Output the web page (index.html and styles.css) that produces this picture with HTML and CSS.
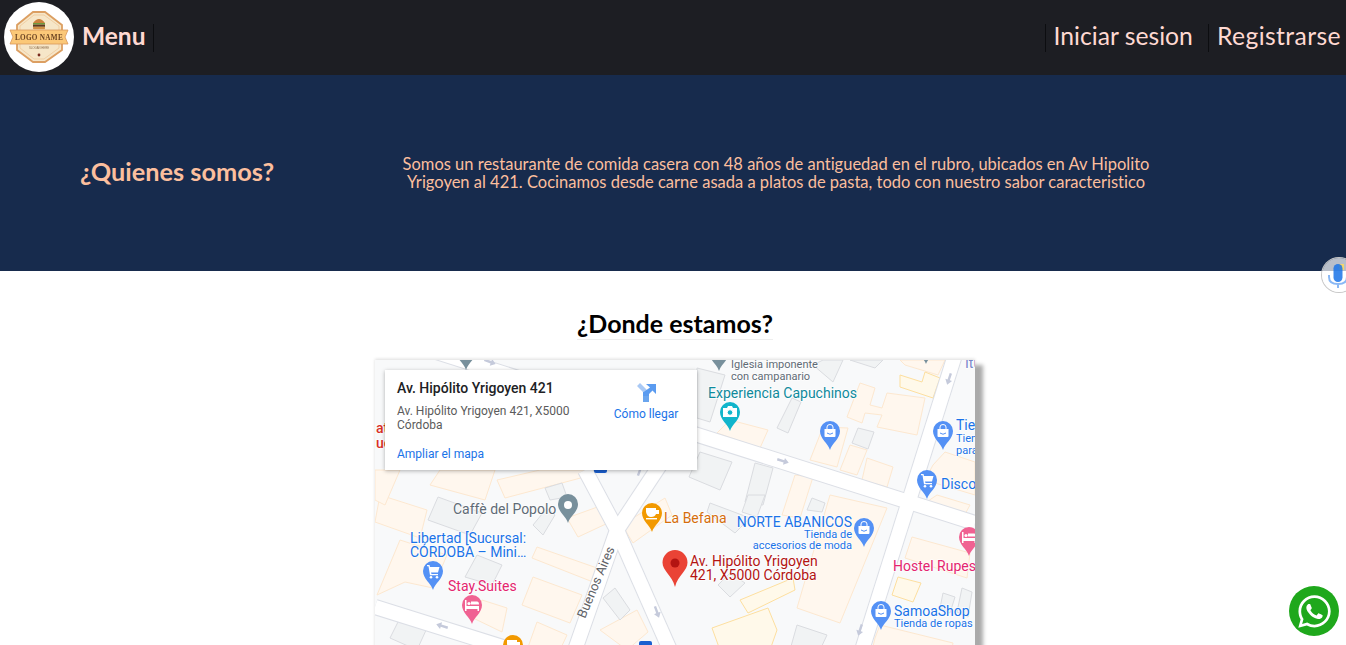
FILE: index.html
```html
<!DOCTYPE html>
<html lang="es">
<head>
<meta charset="utf-8">
<title>Restaurante</title>
<link rel="stylesheet" href="styles.css">
</head>
<body>
<header class="topbar">
  <nav class="nav-left">
    <svg class="logo" viewBox="0 0 70 70" aria-label="Logo">
      <circle cx="35" cy="35" r="35" fill="#fff"/>
      <path d="M29 10H41L58 23V48L41 60H29L13 48V23Z" fill="#f6e6c8" stroke="#dc9f62" stroke-width="1.800"/>
      <path d="M30 13H40L55 24V46L40 57H30L16 46V24Z" fill="none" stroke="#ecc08c" stroke-width=".6"/>
      <path d="M29 21Q35 13 41 21Z" fill="#c9803c"/>
      <rect x="29" y="21" width="12" height="1.600" fill="#6f9a3d"/>
      <rect x="29" y="22.600" width="12" height="2.200" fill="#5b3a22"/>
      <rect x="29" y="24.800" width="12" height="2.400" rx="1" fill="#d08f45"/>
      <path d="M6 28H64L61 35L64 42H6L9 35Z" fill="#fbc878" stroke="#d9975a" stroke-width=".8"/>
      <text class="logo-name" x="35" y="38">LOGO NAME</text>
      <text class="logo-slogan" x="35" y="47">SLOGAN HERE</text>
      <circle cx="35" cy="53" r="1.400" fill="#7a2c20"/>
    </svg>
    <a class="nav-link nav-menu">Menu</a>
  </nav>
  <nav class="nav-right">
    <a class="nav-link nav-auth">Iniciar sesion</a>
    <a class="nav-link nav-auth">Registrarse</a>
  </nav>
</header>

<section class="about">
  <h2 class="about-title">¿Quienes somos?</h2>
  <p class="about-text">Somos un restaurante de comida casera con 48 años de antiguedad en el rubro, ubicados en Av Hipolito Yrigoyen al 421. Cocinamos desde carne asada a platos de pasta, todo con nuestro sabor caracteristico</p>
</section>

<section class="where">
  <h2 class="where-title">¿Donde estamos?</h2>
  <div class="map">
    <svg class="map-canvas" viewBox="375 360 600 450" width="600" height="450">
      <defs>
        <path id="pin" d="M0 0C-2-7-10-11-10-19A10 10 0 1 1 10-19C10-11 2-7 0 0Z"/>
        <g id="i-bag" class="glyph"><path d="M-5.500-21H5.500V-14Q5.500-13 4.500-13H-4.500Q-5.500-13-5.500-14Z"/><path class="glyph-line" d="M-3-21V-23Q-3-25.500 0-25.500T3-23V-21"/><path class="glyph-cut" d="M-3-17Q0-14.500 3-17"/></g>
        <g id="i-cart" class="glyph"><path d="M-6-25H-3.500L-3-23H6.500L5-17.500H-2L-1.500-16H5V-14.800H-3L-4.500-23.800H-6Z"/><circle cx="-2" cy="-12.800" r="1.300"/><circle cx="4" cy="-12.800" r="1.300"/></g>
        <g id="i-cam" class="glyph"><path d="M-7-23H-3L-2-25H2L3-23H7V-14H-7Z"/><circle class="glyph-hole" cx="0" cy="-18.500" r="2.800"/></g>
        <g id="i-cup" class="glyph"><path d="M-6-24H4V-22H7V-18H4Q3-15-1-15T-6-20Z"/><rect x="-6" y="-14" width="11" height="1.400"/></g>
        <g id="i-bed" class="glyph"><path d="M-7-24H-5.500V-18H7V-13H5.500V-15H-5.500V-13H-7Z"/><circle cx="-3" cy="-20.500" r="1.600"/><path d="M-1-22.500H5Q7-22.500 7-19.500H-1Z"/></g>
        <g id="i-arrow"><path class="arrow" d="M-6-1.200H1V-3.500L6 0L1 3.500V1.200H-6Z"/></g>
      </defs>

      <rect class="ground" x="375" y="360" width="600" height="450"/>

      <g class="b-beige">
        <path d="M847 417L860 383L875 388L870 405L882 408L887 393L925 398L917 435L877 427L882 415L865 413L862 423Z"/>
        <path d="M717 433L730 420L768 430L760 448Z"/>
        <path d="M810 460L823 427L848 428L837 467Z"/>
        <path d="M840 470L850 445L867 450L857 475Z"/>
        <path d="M862 480L867 458L893 467L887 487Z"/>
        <path d="M933 465L945 452L975 462V495L925 480Z"/>
        <path d="M782 515L795 475L813 477L800 518Z"/>
        <path d="M830 495L887 508L840 623L797 608Z"/>
        <path d="M905 558L912 537L970 553L967 578Z"/>
        <path d="M875 638L880 625L953 643L950 660H870Z"/>
        <path d="M922 505L937 495L970 505L963 518Z"/>
        <path d="M375 522L380 495L427 510L420 538Z"/>
        <path d="M377 595L400 540L447 555L433 588L405 582Z"/>
        <path d="M532 558L537 547L597 568L593 582Z"/>
        <path d="M522 605L533 577L582 595L570 623Z"/>
        <path d="M473 618L482 600L507 608L502 632Z"/>
        <path d="M527 650L537 622L567 635L560 650Z"/>
        <path d="M600 630L637 610L648 632L627 650Z"/>
        <path d="M567 518L603 505L608 523L578 537Z"/>
        <path d="M622 525L665 498L672 515L633 543Z"/>
        <path d="M430 485L440 470L495 470L485 500Z"/>
        <path d="M497 480L540 470L585 470L592 475L505 498Z"/>
        <path d="M375 470H400L385 505L375 500Z"/>
        <path d="M900 360H945L938 375L905 365Z"/>
      </g>
      <g class="b-yellow">
        <path d="M900 375L922 382L925 372L940 378L933 398L900 387Z"/>
        <path d="M740 600L793 578L795 590L748 613Z"/>
        <path d="M712 628L768 608L777 630L770 650H720Z"/>
        <path d="M892 595L898 577L921 583L913 602Z"/>
      </g>
      <g class="b-gray">
        <path d="M852 443L858 428L874 432L868 449Z"/>
        <path d="M777 428L792 398L801 402L788 433Z"/>
        <path d="M697 368L725 375L710 422L697 418Z"/>
        <path d="M689 477L700 452L732 462L720 490Z"/>
        <path d="M745 502L755 463L773 468L763 505Z"/>
        <path d="M813 365L823 360H843L833 382Z"/>
        <path d="M850 360L875 368L883 360Z"/>
        <path d="M718 585L730 573L745 583L730 597Z"/>
        <path d="M790 650L797 625L827 635L820 650Z"/>
        <path d="M940 608L943 593L955 597L950 613Z"/>
        <path d="M957 612L962 588L972 592L968 617Z"/>
        <path d="M742 512L748 495L765 495L757 517Z"/>
        <path d="M707 512L710 503L750 518L735 533Z"/>
        <path d="M807 510L812 498L825 503L822 512Z"/>
        <path d="M428 520L438 497L482 513L470 535Z"/>
        <path d="M465 577L477 555L502 565L492 585Z"/>
        <path d="M390 638L400 618L427 628L417 650Z"/>
        <path d="M603 598L615 588L630 610L620 620Z"/>
        <path d="M533 525L547 508L555 515L543 535Z"/>
        <path d="M545 488L562 483L567 497L550 500Z"/>
      </g>

      <g class="road-edge">
        <path d="M430 350L975 523"/>
        <path d="M955 355L862 650"/>
        <path d="M375 607L570 668"/>
        <path d="M575 650L617 530L585 470"/>
        <path d="M617 530L670 650"/>
        <path d="M617 530L660 465"/>
      </g>
      <g class="road">
        <path d="M430 350L975 523"/>
        <path d="M955 355L862 650"/>
        <path d="M375 607L570 668"/>
        <path d="M575 650L617 530L585 470"/>
        <path d="M617 530L670 650"/>
        <path d="M617 530L660 465"/>
      </g>

      <use href="#i-arrow" transform="translate(783 461) rotate(17)"/>
      <use href="#i-arrow" transform="translate(949 379) rotate(108)"/>
      <use href="#i-arrow" transform="translate(442 626) rotate(197)"/>
      <use href="#i-arrow" transform="translate(657 612) rotate(70)"/>
      <use href="#i-arrow" transform="translate(860 630) rotate(108)"/>
      <use href="#i-arrow" transform="translate(640 470) rotate(-70)"/>
      <use href="#i-arrow" transform="translate(490 362) rotate(20)"/>

      <text class="t t-red t-b" x="376" y="433">at</text>
      <text class="t t-red t-b" x="376" y="448">ue</text>

      <use class="pin-gray" href="#pin" transform="translate(466 370)"/>
      <use class="pin-gray" href="#pin" transform="translate(719 371)"/>
      <use class="pin-gray" href="#pin" transform="translate(926 364) scale(.7)"/>
      <text class="t t-small t-gray" x="731" y="368">Iglesia imponente</text>
      <text class="t t-small t-gray" x="731" y="380">con campanario</text>
      <text class="t t-indigo" x="965" y="368">Itu</text>

      <text class="t t-teal" x="708" y="398">Experiencia Capuchinos</text>
      <use class="pin-teal" href="#pin" transform="translate(730 431)"/>
      <use href="#i-cam" transform="translate(730 431)"/>

      <use class="pin-blue" href="#pin" transform="translate(830 450)"/>
      <use href="#i-bag" transform="translate(830 450)"/>

      <use class="pin-blue" href="#pin" transform="translate(943 450)"/>
      <use href="#i-bag" transform="translate(943 450)"/>
      <text class="t t-blue" x="956" y="430">Tie</text>
      <text class="t t-small t-blue" x="956" y="442">Tien</text>
      <text class="t t-small t-blue" x="956" y="454">para</text>

      <use class="pin-blue" href="#pin" transform="translate(927 499)"/>
      <use href="#i-cart" transform="translate(927 499)"/>
      <text class="t t-blue" x="941" y="489">Disco</text>

      <rect class="transit" x="594" y="462" width="13" height="11" rx="2"/>
      <rect class="transit" x="639" y="641" width="13" height="12" rx="2"/>

      <text class="t t-gray" x="453" y="514">Caffè del Popolo</text>
      <use class="pin-gray" href="#pin" transform="translate(568 523)"/>
      <circle class="pin-dot" cx="568" cy="505" r="4"/>

      <use class="pin-orange" href="#pin" transform="translate(652 532)"/>
      <use href="#i-cup" transform="translate(652 532)"/>
      <text class="t t-orange" x="664" y="523">La Befana</text>

      <text class="t t-road" transform="translate(585 619) rotate(-67)">Buenos Aires</text>

      <text class="t t-blue t-end" x="852" y="527">NORTE ABANICOS</text>
      <text class="t t-small t-blue t-end" x="852" y="538">Tienda de</text>
      <text class="t t-small t-blue t-end" x="852" y="549">accesorios de moda</text>
      <use class="pin-blue" href="#pin" transform="translate(864 547)"/>
      <use href="#i-bag" transform="translate(864 547)"/>

      <use class="pin-pink" href="#pin" transform="translate(969 556)"/>
      <use href="#i-bed" transform="translate(969 556)"/>
      <text class="t t-pink" x="893" y="571">Hostel Rupes</text>

      <use class="pin-blue" href="#pin" transform="translate(881 630)"/>
      <use href="#i-bag" transform="translate(881 630)"/>
      <text class="t t-blue" x="894" y="616">SamoaShop</text>
      <text class="t t-small t-blue" x="894" y="627">Tienda de ropas</text>

      <text class="t t-blue" x="410" y="543">Libertad [Sucursal:</text>
      <text class="t t-blue" x="410" y="557">CÓRDOBA – Mini…</text>
      <use class="pin-blue" href="#pin" transform="translate(433 590)"/>
      <use href="#i-cart" transform="translate(433 590)"/>

      <text class="t t-pink" x="448" y="591">Stay.Suites</text>
      <use class="pin-pink" href="#pin" transform="translate(472 624)"/>
      <use href="#i-bed" transform="translate(472 624)"/>

      <use class="pin-orange" href="#pin" transform="translate(513 664)"/>
      <use href="#i-cup" transform="translate(513 664)"/>

      <path class="marker" d="M675 587C672 575 662.500 571 662.500 562.500A12.500 12.500 0 1 1 687.500 562.500C687.500 571 678 575 675 587Z"/>
      <circle class="marker-dot" cx="675" cy="563" r="4.500"/>
      <text class="t t-dark-red" x="690" y="566">Av. Hipólito Yrigoyen</text>
      <text class="t t-dark-red" x="690" y="580">421, X5000 Córdoba</text>
    </svg>

    <aside class="info">
      <div class="info-main">
        <div class="info-title">Av. Hipólito Yrigoyen 421</div>
        <div class="info-address">Av. Hipólito Yrigoyen 421, X5000 Córdoba</div>
        <a class="info-link">Ampliar el mapa</a>
      </div>
      <a class="directions">
        <svg class="directions-icon" viewBox="0 0 19 19">
          <path class="dir-light" d="M0 3L3 0L11 8V11H6V9Z"/>
          <path class="dir-mid" d="M6 9H12V19H6Z"/>
          <path class="dir-dark" d="M9 1H19V11L15.500 7.500L12 11V13H6V9.500L13 4.500Z"/>
        </svg>
        <span>Cómo llegar</span>
      </a>
    </aside>
  </div>
</section>

<div class="mic">
  <svg viewBox="0 0 34 34" width="34" height="34">
    <rect class="mic-y" x="17" y="6" width="5" height="6"/>
    <rect class="mic-b" x="11.500" y="6" width="9" height="18" rx="4.500"/>
    <path class="mic-arc" d="M7 17V19Q7 26 16 26T25 19V17M16 26V30"/>
  </svg>
</div>

<a class="whatsapp">
  <svg viewBox="0 0 448 512" width="33" height="37">
    <path fill="#fff" d="M380.900 97.100C339 55.100 283.200 32 223.900 32c-122.400 0-222 99.600-222 222 0 39.100 10.200 77.300 29.600 111L0 480l117.700-30.900c32.400 17.700 68.900 27 106.100 27h.1c122.300 0 224.100-99.600 224.100-222 0-59.300-25.200-115-67.100-157zm-157 341.600c-33.200 0-65.700-8.900-94-25.700l-6.700-4-69.800 18.300L72 359.200l-4.400-7c-18.500-29.400-28.200-63.300-28.200-98.200 0-101.700 82.800-184.500 184.600-184.500 49.300 0 95.600 19.200 130.400 54.100 34.800 34.900 56.200 81.200 56.100 130.500 0 101.800-84.900 184.600-186.600 184.600zm101.200-138.200c-5.500-2.800-32.800-16.200-37.900-18-5.100-1.900-8.800-2.800-12.500 2.800-3.700 5.600-14.300 18-17.600 21.800-3.200 3.700-6.500 4.200-12 1.400-32.600-16.300-54-29.100-75.500-66-5.700-9.800 5.700-9.100 16.300-30.300 1.800-3.700.9-6.900-.5-9.700-1.400-2.800-12.500-30.100-17.100-41.200-4.500-10.800-9.100-9.300-12.500-9.500-3.200-.2-6.900-.2-10.600-.2-3.700 0-9.700 1.400-14.800 6.900-5.100 5.600-19.400 19-19.400 46.300 0 27.300 19.900 53.700 22.600 57.400 2.800 3.700 39.100 59.700 94.800 83.800 35.200 15.200 49 16.500 66.600 13.900 10.700-1.600 32.800-13.400 37.400-26.400 4.600-13 4.600-24.100 3.200-26.400-1.300-2.500-5-3.900-10.500-6.600z"/>
  </svg>
</a>
</body>
</html>
```

FILE: styles.css
```css
* { box-sizing: border-box; }
html, body { margin: 0; padding: 0; }
html { overflow-y: hidden; }
body { background: #fff; font-family: Lato, "Noto Sans", sans-serif; font-variant-ligatures: none; height: 645px; overflow: hidden; }

.topbar {
  height: 75px;
  background: #1d1e23;
  display: flex;
  justify-content: space-between;
  align-items: center;
  padding-left: 4px;
}
.nav-left, .nav-right { display: flex; align-items: center; }
.logo { width: 70px; height: 70px; margin-top: -1px; filter: blur(.4px); }
.logo-name { font: bold 7.200px "Liberation Serif", serif; text-anchor: middle; fill: #6b4423; letter-spacing: .3px; }
.logo-slogan { font: 2.800px "Liberation Sans", sans-serif; text-anchor: middle; fill: #8a6a4a; }

.nav-link { color: #ffd9d2; font-size: 25px; line-height: 24px; padding-bottom: 4px; display: block; }
.nav-menu { font-weight: 700; font-size: 24.500px; margin-left: 8px; padding-right: 7px; border-right: 1px solid #0c0d10; }
.nav-auth { border-left: 1px solid #0c0d10; padding-left: 8px; font-size: 24.700px; }
.nav-auth + .nav-auth { margin-left: 15px; padding-right: 5px; letter-spacing: .4px; }

.about {
  height: 196px;
  background: #172b4d;
  display: grid;
  grid-template-columns: 296px 800px;
  align-items: center;
  padding-left: 80px;
  color: #fcbf9e;
}
.about-title { margin: 0; font-size: 25.300px; font-weight: 700; padding-bottom: 4px; }
.about-text { margin: 0; font-size: 16.500px; line-height: 18px; text-align: center; padding: 0 15px 1px; }

.where { display: flex; flex-direction: column; align-items: center; padding-left: 4px; }
.where-title {
  margin: 37px 0 20px;
  font-size: 25px;
  line-height: 30px;
  font-weight: 700;
  color: #000;
  border-bottom: 1px solid #eee;
  height: 32px;
}

.map {
  position: relative;
  width: 600px;
  height: 450px;
  flex: none;
  box-shadow: 8px 5px 4px #aaa, 0 -1px 3px #ddd;
}
.map-canvas { display: block; font-family: Roboto, sans-serif; }

.ground { fill: #f8f9fa; }
.b-beige path { fill: #fff7ee; stroke: #fde8d0; stroke-width: 1; }
.b-yellow path { fill: #fff9ea; stroke: #fddf9f; stroke-width: 1; }
.b-gray path { fill: #f1f3f4; stroke: #dadce0; stroke-width: 1; }
.road-edge path { fill: none; stroke: #dcdfe6; stroke-width: 16; }
.road path { fill: none; stroke: #fff; stroke-width: 14; }
.arrow { fill: #c5cadb; }

.t { font-size: 14px; paint-order: stroke; stroke: #fff; stroke-width: 1.500px; stroke-opacity: .8; }
.t-small { font-size: 11px; }
.t-end { text-anchor: end; }
.t-b { font-weight: 500; }
.t-gray { fill: #5f6b76; }
.t-blue { fill: #1a73e8; }
.t-teal { fill: #0f8a9c; }
.t-indigo { fill: #7986cb; }
.t-orange { fill: #d56e0c; }
.t-pink { fill: #e4256f; }
.t-red { fill: #d93025; }
.t-dark-red { fill: #b31412; }
.t-road { fill: #5f6368; font-size: 13px; }

.pin-blue { fill: #5491f5; }
.pin-gray { fill: #78909c; }
.pin-teal { fill: #12b5cb; }
.pin-orange { fill: #f29900; }
.pin-pink { fill: #f06292; }
.pin-dot { fill: #fff; }
.transit { fill: #1a5fd0; }
.marker { fill: #ea4335; }
.marker-dot { fill: #b31412; }

.glyph { fill: #fff; }
.glyph-line { fill: none; stroke: #fff; stroke-width: 1; }
.glyph-cut { fill: none; stroke: #5491f5; stroke-width: 1; }
.glyph-hole { fill: #12b5cb; stroke: #fff; stroke-width: 1; }

.info {
  position: absolute;
  left: 10px;
  top: 10px;
  width: 312px;
  height: 100px;
  background: #fff;
  box-shadow: 0 1px 4px rgba(0, 0, 0, .3);
  font-family: Roboto, sans-serif;
  display: flex;
  padding: 10px 12px;
}
.info-main { width: 188px; flex: none; display: flex; flex-direction: column; }
.info-title { font-size: 14px; font-weight: 500; color: #202124; line-height: 17px; white-space: nowrap; }
.info-address { font-size: 12px; color: #5b5b5b; line-height: 14px; margin-top: 7px; }
.info-link { font-size: 12px; color: #1a73e8; line-height: 14px; margin-top: 15px; }
.directions {
  margin-left: 29px;
  display: flex;
  flex-direction: column;
  align-items: center;
  font-size: 12px;
  color: #1a73e8;
  line-height: 14px;
  width: 64px;
  white-space: nowrap;
}
.directions-icon { width: 19px; height: 19px; margin: 3px 0 5px; }
.dir-light { fill: #a9c9f5; }
.dir-mid { fill: #6aa5ee; }
.dir-dark { fill: #5a9bf0; }

.mic {
  position: fixed;
  left: 1322px;
  top: 258px;
  width: 34px;
  height: 34px;
  border-radius: 50%;
  background: rgba(255, 255, 255, .7);
  box-shadow: 0 0 0 1px #c8c8c8;
}
.mic svg { display: block; }
.mic-y { fill: #f5d76e; }
.mic-b { fill: #1a73e8; opacity: .85; }
.mic-arc { fill: none; stroke: #8ab8f5; stroke-width: 2; }

.whatsapp {
  position: fixed;
  right: 7px;
  bottom: 9px;
  width: 50px;
  height: 50px;
  border-radius: 50%;
  background: #1fa81c;
  display: flex;
  align-items: center;
  justify-content: center;
}
```
